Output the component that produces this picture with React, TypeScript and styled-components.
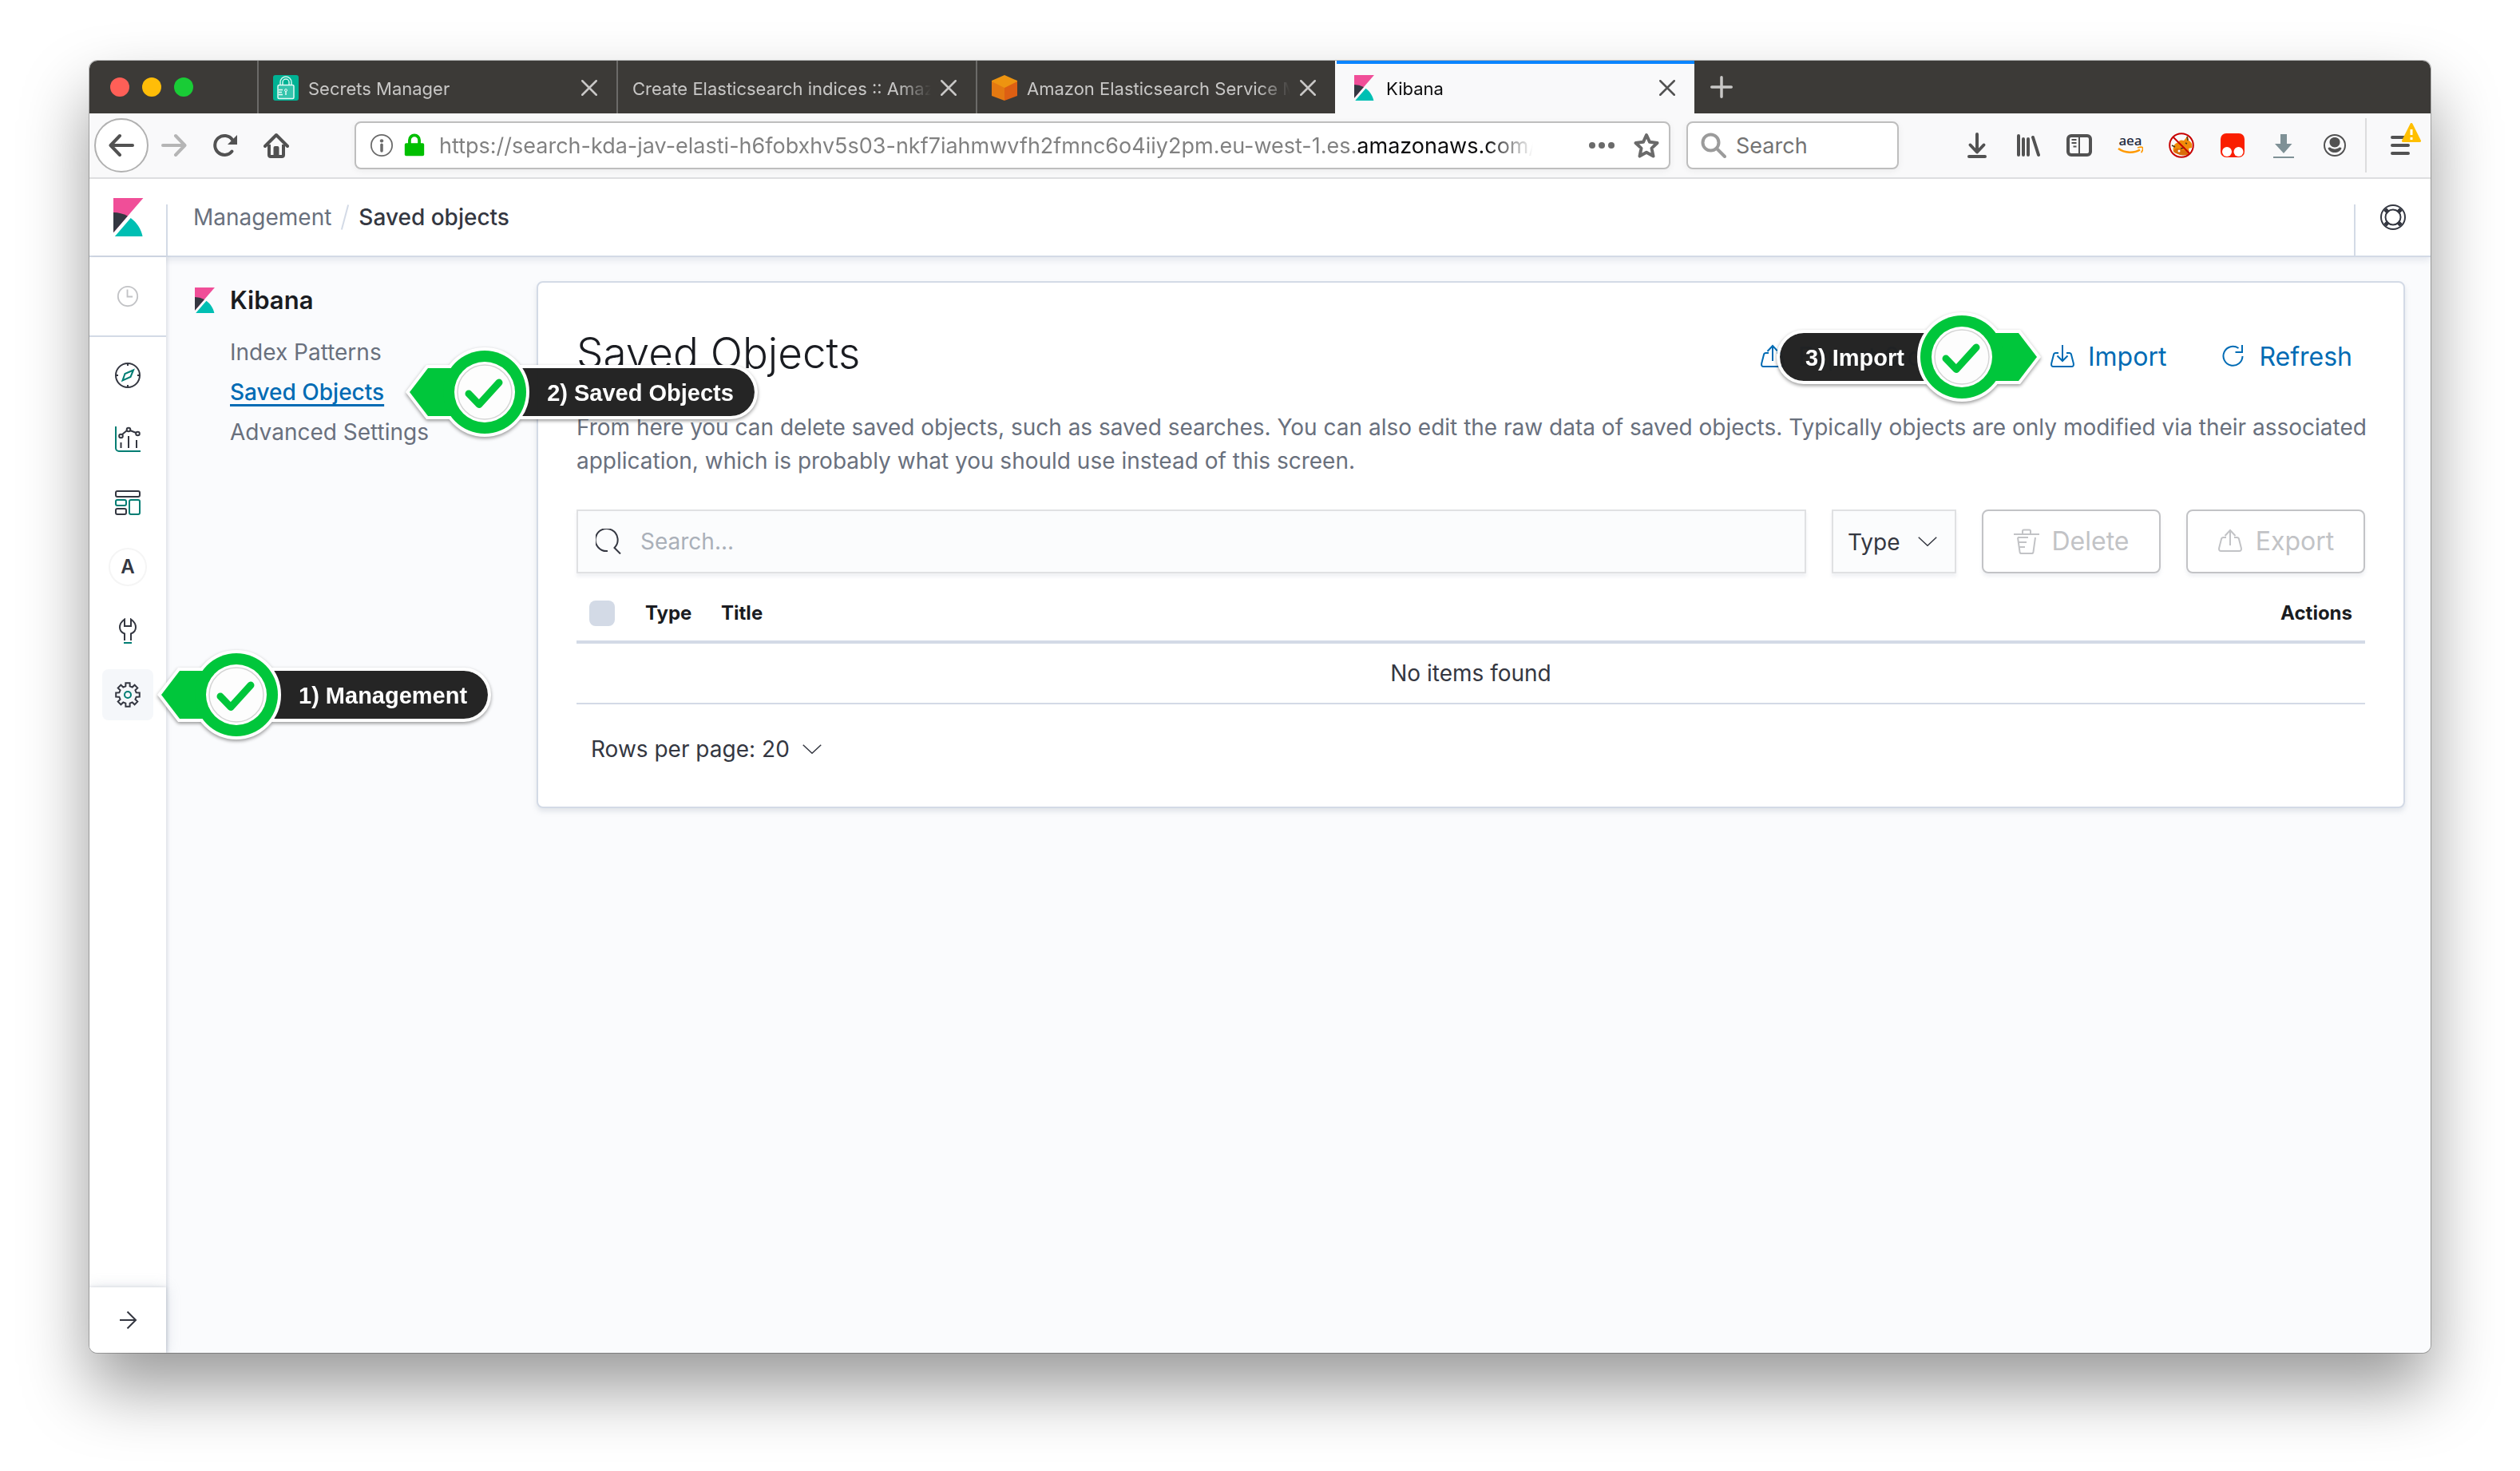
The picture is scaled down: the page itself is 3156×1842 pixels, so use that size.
import React from "react";
import styled, { createGlobalStyle, css } from "styled-components";

const color = {
  ink: "#343741",
  title: "#1a1c21",
  subdued: "#69707d",
  link: "#006bb4",
  line: "#d3dae6",
  page: "#fafbfd",
  field: "#fbfcfd",
  disabled: "#c2c3c6",
  teal: "#017d73",
  chromeDark: "#3c3a37",
  chromeIcon: "#525252",
  green: "#00c63b",
};

const GlobalStyle = createGlobalStyle`
  *, *::before, *::after { box-sizing: border-box; }
  body {
    margin: 0;
    background: #fff;
    color: ${color.ink};
    font-family: Inter, "Liberation Sans", sans-serif;
    font-size: 28px;
    line-height: 42px;
  }
  button, input, select {
    font: inherit;
    color: inherit;
    margin: 0;
    padding: 0;
    border: 0;
    border-radius: 0;
    background: none;
    outline: none;
  }
  button { cursor: pointer; }
  a { color: inherit; text-decoration: none; }
  ul { margin: 0; padding: 0; list-style: none; }
  h1, h2, p { margin: 0; font-weight: inherit; font-size: inherit; }
  svg { display: block; flex: none; }
`;

/* ---------- icons ---------- */

type IconProps = { size?: number; children: React.ReactNode; width?: number };

const Icon = ({ size = 32, width = 2, children }: IconProps) => (
  <svg
    width={size}
    height={size}
    viewBox="0 0 32 32"
    fill="none"
    stroke="currentColor"
    strokeWidth={width}
    aria-hidden="true"
  >
    {children}
  </svg>
);

const KibanaLogo = ({ size }: { size: number }) => (
  <svg width={size} height={size} viewBox="0 0 32 32" aria-hidden="true">
    <path fill="#f04e98" d="M4 0v28.789L28.935.017z" />
    <path fill="#343741" d="M4 12v16.789l11.906-13.738A24.721 24.721 0 0 0 4 12" />
    <path fill="#00bfb3" d="M18.479 16.664L6.268 30.754l-1.073 1.237h23.191c-1.252-6.292-4.883-11.719-9.908-15.327" />
  </svg>
);

const SecretsIcon = () => (
  <svg width="32" height="32" viewBox="0 0 32 32" aria-hidden="true">
    <rect width="32" height="32" rx="3" fill="#00b294" />
    <path d="M9 12V9a7 7 0 0 1 14 0v3M12 12V9a4 4 0 0 1 8 0v3" fill="none" stroke="#d5f5ee" strokeWidth="1.5" />
    <rect x="6" y="12.5" width="20" height="17" rx="1.5" fill="#35c4ac" stroke="#e6faf6" strokeWidth="1.5" />
    <path d="M7 18.500h5M7 21.500h4M7 24.500h5M16 20v5" stroke="#e6faf6" strokeWidth="1.5" />
    <circle cx="16" cy="19" r="1.5" fill="none" stroke="#e6faf6" />
  </svg>
);

const CubeIcon = () => (
  <svg width="32" height="32" viewBox="0 0 32 32" aria-hidden="true">
    <path fill="#ee9410" d="M16 0 32 7v2l-16 8L0 9V7z" />
    <path fill="#e47911" d="M0 8l16 8v16L0 26z" />
    <path fill="#dd5f13" d="M32 8l-16 8v16l16-6z" />
  </svg>
);

const CloseIcon = () => (
  <Icon size={20} width={4}>
    <path d="M2 2l28 28M30 2L2 30" strokeLinecap="round" />
  </Icon>
);

const PlusIcon = () => (
  <Icon size={28} width={4}>
    <path d="M16 2v28M2 16h28" strokeLinecap="round" />
  </Icon>
);

const ArrowLeftIcon = () => (
  <Icon width={4}>
    <path d="M30 16H3M14 4L2.500 16 14 28" strokeLinecap="round" strokeLinejoin="round" />
  </Icon>
);

const ArrowRightIcon = () => (
  <Icon width={4}>
    <path d="M2 16h27M18 4l11.500 12L18 28" strokeLinecap="round" strokeLinejoin="round" />
  </Icon>
);

const ReloadIcon = () => (
  <Icon width={4}>
    <path d="M24.500 23.500A12 12 0 1 1 25 9" strokeLinecap="round" />
    <path d="M31 3v12H19z" fill="currentColor" stroke="none" />
  </Icon>
);

const HomeIcon = () => (
  <Icon width={4}>
    <path d="M2 17L16 3l14 14" strokeLinecap="round" strokeLinejoin="round" />
    <path d="M7 15v13a2 2 0 0 0 2 2h14a2 2 0 0 0 2-2V15" />
    <path d="M12.500 30V19a2 2 0 0 1 2-2h3a2 2 0 0 1 2 2v11z" fill="currentColor" stroke="none" />
  </Icon>
);

const InfoIcon = () => (
  <Icon size={28}>
    <circle cx="16" cy="16" r="15" />
    <circle cx="16" cy="9.5" r="2.5" fill="currentColor" stroke="none" />
    <path d="M16 15v9" strokeWidth="4" strokeLinecap="round" />
  </Icon>
);

const LockIcon = () => (
  <Icon size={30} width={4}>
    <path d="M9.500 15V9a6.500 6.500 0 0 1 13 0v6" />
    <rect x="3" y="13" width="26" height="17" rx="2" fill="currentColor" stroke="none" />
  </Icon>
);

const DotsIcon = () => (
  <Icon>
    <g fill="currentColor" stroke="none">
      <circle cx="4" cy="16" r="4" />
      <circle cx="16" cy="16" r="4" />
      <circle cx="28" cy="16" r="4" />
    </g>
  </Icon>
);

const StarIcon = () => (
  <Icon width={4}>
    <path d="M16 3l4 8.800 9.500 1.200-7 6.600 2 10L16 24.800l-8.500 4.800 2-10-7-6.600 9.500-1.200z" strokeLinejoin="round" />
  </Icon>
);

const GlassIcon = () => (
  <Icon width={4}>
    <circle cx="12.5" cy="12.5" r="10" />
    <path d="M20 20l10 10" strokeLinecap="round" />
  </Icon>
);

const DownloadsIcon = () => (
  <Icon width={4}>
    <path d="M16 2v22M7.500 15.500L16 24.500 24.500 15.500" strokeLinejoin="round" strokeLinecap="round" />
    <path d="M6 30h20" strokeLinecap="round" />
  </Icon>
);

const LibraryIcon = () => (
  <Icon width={4}>
    <path d="M4 4v24M10 8v20M16 8v20M22 6l7 22" strokeLinecap="round" />
  </Icon>
);

const SidebarIcon = () => (
  <Icon width={4}>
    <rect x="2" y="4" width="28" height="24" rx="4" />
    <path d="M16 4v24" strokeWidth="2" />
    <path d="M6.500 9h6M6.500 13h6M8.500 17.500h4" strokeWidth="2" />
  </Icon>
);

const AeaIcon = () => (
  <svg width="32" height="32" viewBox="0 0 32 32" aria-hidden="true">
    <text x="16" y="16" textAnchor="middle" fontFamily="Noto Sans, sans-serif" fontSize="17" fontWeight="500" fill="#1f2b3e">
      aea
    </text>
    <path d="M1 20c8 6 20 6 27 1.500" fill="none" stroke="#f90" strokeWidth="2.5" />
    <path d="M25 19c3-1 6-1 6.500 0s0 4-2 6" fill="none" stroke="#f90" strokeWidth="1.8" />
  </svg>
);

const NoFoxIcon = () => (
  <svg width="32" height="32" viewBox="0 0 32 32" aria-hidden="true">
    <path
      fill="#f08c0a"
      d="M6 24c-1-5 0-10 6-12 2-3 4-3 7-2l5-6 1 6c4 2 5 5 4 9l-4 1c1 3 1 6-1 9l-6-3c-4 1-9 1-12-2z"
    />
    <path d="M6 23c3-4 6-4 9-2s6 0 9 3l1 4c-6 1-14 1-19-5z" fill="#d96c0a" />
    <path d="M4 16l4 2M23 5l1 5M21 13l2 1M15 20l5-1" stroke="#4d3a1c" strokeWidth="1.5" />
    <circle cx="13" cy="23" r="1.5" fill="#fff" />
    <circle cx="16" cy="16" r="14.8" fill="none" stroke="#c80000" strokeWidth="2" />
    <path d="M5.500 5.500l21 21" stroke="#c80000" strokeWidth="2" />
  </svg>
);

const RedBoxIcon = () => (
  <svg width="32" height="32" viewBox="0 0 32 32" aria-hidden="true">
    <rect x="1" y="1" width="30" height="30" rx="7" fill="#fa1e00" />
    <circle cx="9" cy="24" r="6" fill="#fff" />
    <circle cx="23.5" cy="24" r="6" fill="#fff" />
  </svg>
);

const GreyDownIcon = () => (
  <svg width="32" height="32" viewBox="0 0 32 32" fill="#7f9196" aria-hidden="true">
    <path d="M12 2h8v12h6.500L16 26 5 14h7zM3 30h26v2H3z" />
  </svg>
);

const AccountIcon = () => (
  <Icon width={2}>
    <circle cx="16" cy="16" r="13" />
    <g fill="currentColor" stroke="none">
      <path d="M16 6c4 0 6.500 2.500 6.500 6s-2.500 6.500-6.500 6.500-6.500-3-6.500-6.500S12 6 16 6z" />
      <path d="M7.500 19.500c1.500-1.500 3-1 4 0 2.500 1.500 6.500 1.500 9 0 1-1 2.500-1.500 4 0-1 3.500-4.500 5.500-8.500 5.500s-7.500-2-8.500-5.500z" />
    </g>
  </Icon>
);

const MenuIcon = () => (
  <Icon width={4}>
    <path d="M6 6h20M6 16h20M6 26h20" strokeLinecap="round" />
  </Icon>
);

const WarningIcon = () => (
  <svg width="24" height="24" viewBox="0 0 24 24" aria-hidden="true">
    <path d="M12 1.500L22.500 22.500h-21z" fill="#ffbf00" stroke="#ffbf00" strokeWidth="3" strokeLinejoin="round" />
    <path d="M12 8v7M12 18v3" stroke="#fff" strokeWidth="3" />
  </svg>
);

const HelpIcon = () => (
  <Icon>
    <circle cx="16" cy="16" r="15" />
    <circle cx="16" cy="16" r="9.5" />
    <path d="M6 6l4 4M26 6l-4 4M6 26l4-4M26 26l-4-4" strokeWidth="5" />
  </Icon>
);

const ClockIcon = () => (
  <Icon size={30}>
    <circle cx="16" cy="16" r="13" />
    <path d="M15.500 7v9.500h7" />
  </Icon>
);

const CompassIcon = () => (
  <Icon>
    <circle cx="16" cy="16" r="15" />
    <path d="M16 1v3M16 28v3M1 16h3M28 16h3" />
    <path d="M23 9.500l-3.500 8.500L9.500 22.500 12.500 14z" stroke={color.teal} />
  </Icon>
);

const VisualizeIcon = () => (
  <Icon>
    <path d="M1 0v27a4 4 0 0 0 4 4h27" stroke={color.teal} />
    <path d="M7.500 20v7M17 12v15M27 17v10" />
    <circle cx="7.5" cy="12" r="2.3" />
    <circle cx="17" cy="4" r="2.3" />
    <circle cx="28.5" cy="9" r="2.3" />
    <path d="M9 10l6-5M19 5l7.500 3" />
  </Icon>
);

const DashboardIcon = () => (
  <Icon>
    <rect x="1" y="1" width="30" height="7" rx="2" />
    <rect x="1" y="12" width="13" height="7" rx="2" stroke={color.teal} />
    <rect x="18" y="12" width="13" height="18" rx="2" stroke={color.teal} />
    <rect x="1" y="23" width="13" height="7" rx="2" />
  </Icon>
);

const WrenchIcon = () => (
  <Icon>
    <path d="M12 28v-8.500C8 18 6 15 6 11.500 6 7 8.500 4 12 1.500V10h8V1.500c3.500 2.500 6 5.500 6 10 0 3.500-2 6.500-6 8V28" />
    <path d="M11 31h10" stroke={color.teal} />
  </Icon>
);

const gearOutline = (() => {
  const points: string[] = [];
  for (let tooth = 0; tooth < 8; tooth += 1) {
    const steps: [number, number][] = [
      [-14, 11],
      [-10, 15],
      [10, 15],
      [14, 11],
    ];
    steps.forEach(([offset, radius]) => {
      const angle = ((tooth * 45 + offset) * Math.PI) / 180;
      points.push(`${(16 + radius * Math.cos(angle)).toFixed(2)},${(16 + radius * Math.sin(angle)).toFixed(2)}`);
    });
  }
  return points.join(" ");
})();

const GearIcon = () => (
  <Icon>
    <polygon points={gearOutline} />
    <circle cx="16" cy="16" r="4" stroke={color.teal} />
  </Icon>
);

const ExpandIcon = () => (
  <Icon>
    <path d="M6 16h19M15.500 5.500L26 16 15.500 26.500" />
  </Icon>
);

const ShareBox =
  "M11 11H7.500c-1.500 0-2.200.8-2.500 2L2.200 24c-.5 2.500.3 4 2.500 4h22.600c2.200 0 3-1.500 2.500-4L27 13c-.3-1.200-1-2-2.500-2H21";

const ExportIcon = () => (
  <Icon>
    <path d={ShareBox} />
    <path d="M16 2v19M9.500 9L16 2l6.500 7" />
  </Icon>
);

const ImportIcon = () => (
  <Icon>
    <path d={ShareBox} />
    <path d="M16 1v20M9.500 14.500L16 21l6.500-6.500" />
  </Icon>
);

const RefreshIcon = () => (
  <Icon>
    <path d="M27 1v9h-8.500" />
    <path d="M22.500 5A12 12 0 1 0 27.500 15" />
  </Icon>
);

const TrashIcon = () => (
  <Icon>
    <path d="M0 7h32M11 7V3a1.500 1.500 0 0 1 1.500-1.500h7A1.500 1.500 0 0 1 21 3v4" />
    <path d="M5 11l2.500 18c.2 1.200.8 2 2 2h13c1.200 0 1.800-.8 2-2L27 11" />
    <path d="M5 11h13M6 17h10M7 23h7" />
  </Icon>
);

const SearchIcon = () => (
  <Icon>
    <path d="M15 28A14 14 0 1 1 23.500 24L31 31.500" />
  </Icon>
);

const ChevronIcon = () => (
  <Icon size={24}>
    <path d="M1 9l15 14L31 9" />
  </Icon>
);

/* ---------- window ---------- */

const Desktop = styled.div`
  display: flex;
  min-height: 100vh;
  padding: 76px 112px 148px;
`;

const Window = styled.div`
  flex: 1;
  min-width: 0;
  display: flex;
  flex-direction: column;
  overflow: hidden;
  border-radius: 10px;
  background: ${color.page};
`;

const WindowShadow = styled.div`
  flex: 1;
  min-width: 0;
  display: flex;
  border-radius: 10px;
  box-shadow: 0 0 0 1px rgba(0, 0, 0, 0.25), 0 44px 84px rgba(0, 0, 0, 0.4);
`;

const TabStrip = styled.div`
  display: flex;
  height: 66px;
  background: ${color.chromeDark};
  color: #c8c7c6;
  font-size: 22px;
  line-height: 32px;
`;

const Lights = styled.div`
  display: flex;
  align-items: center;
  gap: 16px;
  width: 210px;
  padding-left: 26px;
`;

const Light = styled.span<{ $fill: string }>`
  width: 24px;
  height: 24px;
  border-radius: 50%;
  background: ${(p) => p.$fill};
`;

const Tab = styled.div<{ $active?: boolean }>`
  display: flex;
  align-items: center;
  gap: 12px;
  width: 450px;
  padding: 2px 24px 0 18px;
  border-left: 2px solid #6b6a68;
  ${(p) =>
    p.$active &&
    css`
      background: #f9f9fa;
      color: #0c0c0d;
      border-left-color: #f9f9fa;
      box-shadow: inset 0 4px 0 #0a84ff;
    `}
`;

const TabTitle = styled.button`
  flex: 1;
  min-width: 0;
  padding-top: 2px;
  overflow: hidden;
  white-space: nowrap;
  text-align: left;
  mask-image: linear-gradient(to left, transparent, #000 40px);
`;

const IconButton = styled.button<{ $tint?: string }>`
  display: flex;
  align-items: center;
  justify-content: center;
  color: ${(p) => p.$tint ?? "inherit"};
`;

const NewTab = styled(IconButton)`
  width: 68px;
`;

const Toolbar = styled.div`
  display: flex;
  align-items: center;
  height: 82px;
  padding: 0 6px;
  background: #f9f9fa;
  border-bottom: 2px solid #e0e0e1;
  color: ${color.chromeIcon};
`;

const ToolButton = styled(IconButton)`
  position: relative;
  width: 64px;
  height: 64px;
`;

const BackButton = styled(IconButton)`
  width: 68px;
  height: 68px;
  border: 2px solid #b1b1b1;
  border-radius: 50%;
  background: #fff;
`;

const ChromeField = styled.div<{ $grow?: boolean }>`
  display: flex;
  align-items: center;
  gap: 12px;
  height: 60px;
  padding: 0 12px 0 18px;
  border: 2px solid #bebebe;
  border-radius: 8px;
  background: #fff;
  box-shadow: 0 2px 8px rgba(0, 0, 0, 0.06);
  ${(p) =>
    p.$grow
      ? css`
          flex: 1;
          min-width: 0;
          margin: 0 20px 0 66px;
        `
      : css`
          width: 266px;
          margin-right: 66px;
          padding-left: 16px;
        `}
`;

const Address = styled.input`
  flex: 1;
  min-width: 0;
  margin: 0 40px 0 4px;
  padding-top: 2px;
  font-size: 27px;
  color: transparent;
  background: linear-gradient(to right, #808080 1151px, #0c0c0d 1151px, #0c0c0d 1310px, transparent 1370px);
  background-clip: text;
  -webkit-background-clip: text;
`;

const ChromeSearch = styled.input`
  flex: 1;
  min-width: 0;
  padding-top: 2px;
  font-size: 27px;
  &::placeholder {
    color: #737373;
    opacity: 1;
  }
`;

const FieldActions = styled.div`
  display: flex;
  gap: 24px;
`;

const ToolDivider = styled.span`
  width: 2px;
  height: 68px;
  margin: 0 10px 0 6px;
  background: #dcdcdd;
`;

const WarningBadge = styled.span`
  position: absolute;
  top: 4px;
  right: 6px;
`;

/* ---------- kibana shell ---------- */

const Header = styled.header`
  display: flex;
  align-items: stretch;
  height: 98px;
  background: #fff;
  border-bottom: 2px solid ${color.line};
  box-shadow: 0 4px 8px rgba(152, 162, 179, 0.2);
  position: relative;
`;

const HeaderCell = styled.a<{ $width: number }>`
  display: flex;
  align-items: center;
  justify-content: center;
  width: ${(p) => p.$width}px;
`;

const HeaderDivider = styled.span`
  width: 2px;
  margin-top: 32px;
  background: ${color.line};
`;

const Breadcrumbs = styled.nav`
  flex: 1;
  display: flex;
  align-items: center;
  gap: 16px;
  padding-left: 32px;
  color: ${color.subdued};
`;

const Slash = styled.span`
  width: 2px;
  height: 32px;
  background: ${color.line};
  transform: rotate(15deg);
`;

const Current = styled.span`
  color: ${color.ink};
  font-weight: 500;
`;

const Body = styled.div`
  flex: 1;
  display: flex;
`;

const Rail = styled.nav`
  position: relative;
  z-index: 1;
  display: flex;
  flex-direction: column;
  width: 96px;
  background: #fff;
  box-shadow: 2px 0 4px rgba(152, 162, 179, 0.3);
`;

const Recent = styled.div`
  display: flex;
  align-items: center;
  justify-content: center;
  height: 100px;
  border-bottom: 2px solid ${color.line};
  color: ${color.disabled};
`;

const RailList = styled.ul`
  flex: 1;
  display: flex;
  flex-direction: column;
  align-items: center;
  gap: 16px;
  padding-top: 16px;
`;

const RailItem = styled.li`
  position: relative;
`;

const RailLink = styled.a<{ $active?: boolean }>`
  display: flex;
  align-items: center;
  justify-content: center;
  width: 64px;
  height: 64px;
  border-radius: 8px;
  background: ${(p) => (p.$active ? "#f5f7fa" : "transparent")};
`;

const Letter = styled.span`
  display: flex;
  align-items: center;
  justify-content: center;
  width: 48px;
  height: 48px;
  border: 2px solid #f5f5f5;
  border-radius: 50%;
  font-size: 24px;
  font-weight: 600;
`;

const Expand = styled(IconButton)`
  height: 82px;
  background: #fff;
  box-shadow: 0 0 16px rgba(152, 162, 179, 0.3), 0 0 4px rgba(152, 162, 179, 0.4);
`;

const Main = styled.main`
  flex: 1;
  min-width: 0;
  display: flex;
  align-items: flex-start;
  padding: 30px 32px;
`;

const SideNav = styled.nav`
  width: 432px;
  padding-top: 8px;
  color: ${color.subdued};
`;

const SideHeading = styled.h2`
  display: flex;
  align-items: center;
  gap: 16px;
  margin-bottom: 24px;
  color: ${color.title};
  font-size: 31px;
  font-weight: 600;
  line-height: 32px;
`;

const SideList = styled.ul`
  padding-left: 48px;
`;

const SideItem = styled.li`
  position: relative;
  width: fit-content;
  line-height: 50px;
`;

const SideLink = styled.a<{ $active?: boolean }>`
  ${(p) =>
    p.$active &&
    css`
      color: ${color.link};
      font-weight: 500;
      text-decoration: underline;
      text-decoration-thickness: 3px;
      text-underline-offset: 5px;
      text-decoration-skip-ink: none;
    `}
`;

/* ---------- saved objects panel ---------- */

const Panel = styled.section`
  flex: 1;
  min-width: 0;
  padding: 48px;
  border: 2px solid ${color.line};
  border-radius: 8px;
  background: #fff;
  box-shadow: 0 4px 6px rgba(152, 162, 179, 0.25);
`;

const PanelHead = styled.div`
  display: flex;
  align-items: flex-end;
  justify-content: space-between;
`;

const Title = styled.h1`
  color: ${color.title};
  font-size: 53px;
  font-weight: 300;
  line-height: 80px;
`;

const HeadActions = styled.div`
  display: flex;
  gap: 36px;
`;

const ActionSlot = styled.div`
  position: relative;
`;

const LinkButton = styled.button`
  display: flex;
  align-items: center;
  gap: 16px;
  height: 70px;
  padding: 0 16px;
  color: ${color.link};
  font-size: 32px;
`;

const Intro = styled.p`
  margin: 32px -16px 40px 0;
  color: ${color.subdued};
`;

const Filters = styled.div`
  display: flex;
  gap: 32px;
`;

const fieldBox = css`
  display: flex;
  align-items: center;
  height: 80px;
  border: 2px solid #e0e1e3;
  background: ${color.field};
  box-shadow: 0 4px 4px rgba(152, 162, 179, 0.15);
`;

const SearchBox = styled.label`
  ${fieldBox}
  flex: 1;
  gap: 24px;
  padding: 0 22px;
`;

const SearchInput = styled.input`
  flex: 1;
  min-width: 0;
  &::placeholder {
    color: #aab0b9;
    opacity: 1;
  }
`;

const TypeBox = styled.div`
  ${fieldBox}
  position: relative;
  width: 156px;
`;

const BareSelect = styled.select`
  appearance: none;
  cursor: pointer;
`;

const TypeSelect = styled(BareSelect)`
  width: 100%;
  height: 100%;
  padding: 2px 0 0 18px;
`;

const TypeChevron = styled.span`
  position: absolute;
  right: 22px;
  pointer-events: none;
`;

const OutlineButton = styled.button`
  display: flex;
  align-items: center;
  justify-content: center;
  gap: 16px;
  width: 224px;
  height: 80px;
  border: 2px solid ${color.disabled};
  border-radius: 8px;
  color: ${color.disabled};
  font-size: 32px;
  box-shadow: 0 4px 4px rgba(152, 162, 179, 0.15);
`;

const Table = styled.table`
  width: 100%;
  margin-top: 16px;
  border-collapse: separate;
  border-spacing: 0;
`;

const HeadCell = styled.th<{ $width?: number; $end?: boolean }>`
  width: ${(p) => (p.$width ? `${p.$width}px` : "auto")};
  height: 72px;
  padding: 0 16px;
  border-bottom: 4px solid ${color.line};
  color: ${color.title};
  font-size: 24px;
  font-weight: 700;
  line-height: 36px;
  text-align: ${(p) => (p.$end ? "right" : "left")};
`;

const SelectAll = styled.input`
  appearance: none;
  display: block;
  width: 32px;
  height: 32px;
  border-radius: 8px;
  background: ${color.line};
`;

const EmptyCell = styled.td`
  height: 76px;
  padding: 0;
  border-bottom: 2px solid ${color.line};
  text-align: center;
`;

const Pager = styled.div`
  display: flex;
  align-items: center;
  gap: 8px;
  height: 48px;
  margin-top: 32px;
  padding-left: 18px;
`;

const PageSize = styled.span`
  display: flex;
  align-items: center;
  gap: 16px;
`;

/* ---------- step markers ---------- */

type Side = "left" | "right";

const Marker = styled.div<{ $side: Side; $gap: number }>`
  position: absolute;
  z-index: 2;
  top: 50%;
  display: flex;
  flex-direction: ${(p) => (p.$side === "right" ? "row" : "row-reverse")};
  align-items: center;
  transform: translateY(-50%);
  filter: drop-shadow(0 2px 2px rgba(0, 0, 0, 0.4));
  pointer-events: none;
  ${(p) => (p.$side === "right" ? `left: calc(100% + ${p.$gap}px);` : `right: calc(100% + ${p.$gap}px);`)}
`;

const MarkerLabel = styled.span<{ $side: Side }>`
  height: 68px;
  border: 4px solid #fff;
  background: rgba(33, 33, 33, 0.97);
  background-clip: padding-box;
  color: #fff;
  font-family: "Liberation Sans", Arial, sans-serif;
  font-size: 29px;
  font-weight: 700;
  line-height: 62px;
  white-space: nowrap;
  ${(p) =>
    p.$side === "right"
      ? css`
          margin-left: -20px;
          padding: 0 26px 0 34px;
          border-radius: 0 34px 34px 0;
        `
      : css`
          margin-right: -20px;
          padding: 0 28px 0 32px;
          border-radius: 34px 0 0 34px;
        `}
`;

const MarkerArt = styled.svg`
  position: relative;
  z-index: 1;
`;

const StepMarker = ({ side, gap, children }: { side: Side; gap: number; children: React.ReactNode }) => (
  <Marker $side={side} $gap={gap}>
    <MarkerArt
      width="160"
      height="120"
      viewBox={side === "right" ? "-100 -60 160 120" : "-60 -60 160 120"}
      aria-hidden="true"
    >
      <g transform={side === "right" ? undefined : "scale(-1 1)"}>
        <g fill="#fff" stroke="#fff" strokeWidth="8">
          <path d="M-94 0L-71-30H0V30H-71z" />
          <circle r="52" />
        </g>
        <g fill={color.green}>
          <path d="M-94 0L-71-30H0V30H-71z" />
          <circle r="52" />
        </g>
      </g>
      <circle r="38" fill="#fff" />
      <circle r="34" fill="#fdfdfd" stroke="#d4d4d4" strokeWidth="1.5" />
      <path
        d="M-20 2L-7 15.500L18-12"
        fill="none"
        stroke={color.green}
        strokeWidth="9"
        strokeLinecap="round"
        strokeLinejoin="round"
      />
    </MarkerArt>
    <MarkerLabel $side={side}>{children}</MarkerLabel>
  </Marker>
);

/* ---------- page ---------- */

const tabs = [
  { title: "Secrets Manager", icon: <SecretsIcon /> },
  { title: "Create Elasticsearch indices :: Amazon", icon: null },
  { title: "Amazon Elasticsearch Service Management", icon: <CubeIcon /> },
  { title: "Kibana", icon: <KibanaLogo size={32} />, active: true },
];

const extensions = [
  { name: "Downloads", icon: <DownloadsIcon /> },
  { name: "Library", icon: <LibraryIcon /> },
  { name: "Sidebars", icon: <SidebarIcon /> },
  { name: "AWS extension", icon: <AeaIcon /> },
  { name: "Proxy disabled", icon: <NoFoxIcon /> },
  { name: "Tampermonkey", icon: <RedBoxIcon /> },
  { name: "Save page", icon: <GreyDownIcon /> },
  { name: "Account", icon: <AccountIcon /> },
];

const apps = [
  { name: "Discover", icon: <CompassIcon /> },
  { name: "Visualize", icon: <VisualizeIcon /> },
  { name: "Dashboard", icon: <DashboardIcon /> },
  { name: "Alerting", icon: <Letter>A</Letter> },
  { name: "Dev Tools", icon: <WrenchIcon /> },
  { name: "Management", icon: <GearIcon />, step: "1) Management" },
];

const sections = [
  { name: "Index Patterns" },
  { name: "Saved Objects", step: "2) Saved Objects" },
  { name: "Advanced Settings" },
];

const Chrome = () => (
  <>
    <TabStrip>
      <Lights>
        <Light $fill="#ff5f57" />
        <Light $fill="#ffbd08" />
        <Light $fill="#19cc36" />
      </Lights>
      {tabs.map((tab) => (
        <Tab key={tab.title} $active={tab.active}>
          {tab.icon}
          <TabTitle>{tab.title}</TabTitle>
          <IconButton aria-label={`Close ${tab.title}`} $tint={tab.active ? color.chromeIcon : "#c8c7c6"}>
            <CloseIcon />
          </IconButton>
        </Tab>
      ))}
      <NewTab aria-label="New tab">
        <PlusIcon />
      </NewTab>
    </TabStrip>
    <Toolbar>
      <BackButton aria-label="Back">
        <ArrowLeftIcon />
      </BackButton>
      <ToolButton aria-label="Forward" $tint="#b5b5b5">
        <ArrowRightIcon />
      </ToolButton>
      <ToolButton aria-label="Reload">
        <ReloadIcon />
      </ToolButton>
      <ToolButton aria-label="Home">
        <HomeIcon />
      </ToolButton>
      <ChromeField $grow>
        <IconButton aria-label="Site information" $tint="#6a6a6a">
          <InfoIcon />
        </IconButton>
        <IconButton aria-label="Secure connection" $tint="#00bf00">
          <LockIcon />
        </IconButton>
        <Address
          aria-label="Address"
          defaultValue="https://search-kda-jav-elasti-h6fobxhv5s03-nkf7iahmwvfh2fmnc6o4iiy2pm.eu-west-1.es.amazonaws.com/"
        />
        <FieldActions>
          <IconButton aria-label="Page actions" $tint="#6a6a6a">
            <DotsIcon />
          </IconButton>
          <IconButton aria-label="Bookmark this page" $tint="#6a6a6a">
            <StarIcon />
          </IconButton>
        </FieldActions>
      </ChromeField>
      <ChromeField>
        <IconButton aria-label="Search the web" $tint="#9b9b9b">
          <GlassIcon />
        </IconButton>
        <ChromeSearch aria-label="Search the web" placeholder="Search" />
      </ChromeField>
      {extensions.map((item) => (
        <ToolButton key={item.name} aria-label={item.name}>
          {item.icon}
        </ToolButton>
      ))}
      <ToolDivider />
      <ToolButton aria-label="Open menu">
        <MenuIcon />
        <WarningBadge>
          <WarningIcon />
        </WarningBadge>
      </ToolButton>
    </Toolbar>
  </>
);

const SavedObjects = () => (
  <Panel>
    <PanelHead>
      <Title>Saved Objects</Title>
      <HeadActions>
        <ActionSlot>
          <LinkButton>
            <ExportIcon />
            Export 0 objects
          </LinkButton>
        </ActionSlot>
        <ActionSlot>
          <LinkButton>
            <ImportIcon />
            Import
          </LinkButton>
          <StepMarker side="left" gap={-6}>
            3) Import
          </StepMarker>
        </ActionSlot>
        <ActionSlot>
          <LinkButton>
            <RefreshIcon />
            Refresh
          </LinkButton>
        </ActionSlot>
      </HeadActions>
    </PanelHead>
    <Intro>
      From here you can delete saved objects, such as saved searches. You can also edit the raw data of saved objects.
      Typically objects are only modified via their associated application, which is probably what you should use
      instead of this screen.
    </Intro>
    <Filters>
      <SearchBox>
        <SearchIcon />
        <SearchInput aria-label="Search saved objects" placeholder="Search..." />
      </SearchBox>
      <TypeBox>
        <TypeSelect aria-label="Type">
          <option>Type</option>
        </TypeSelect>
        <TypeChevron>
          <ChevronIcon />
        </TypeChevron>
      </TypeBox>
      <OutlineButton disabled>
        <TrashIcon />
        Delete
      </OutlineButton>
      <OutlineButton disabled>
        <ExportIcon />
        Export
      </OutlineButton>
    </Filters>
    <Table>
      <thead>
        <tr>
          <HeadCell $width={70}>
            <SelectAll type="checkbox" aria-label="Select all rows" disabled />
          </HeadCell>
          <HeadCell $width={95}>Type</HeadCell>
          <HeadCell>Title</HeadCell>
          <HeadCell $end>Actions</HeadCell>
        </tr>
      </thead>
      <tbody>
        <tr>
          <EmptyCell colSpan={4}>No items found</EmptyCell>
        </tr>
      </tbody>
    </Table>
    <Pager>
      <label htmlFor="page-size">Rows per page:</label>
      <PageSize>
        <BareSelect id="page-size">
          <option>20</option>
        </BareSelect>
        <ChevronIcon />
      </PageSize>
    </Pager>
  </Panel>
);

export default function App() {
  return (
    <>
      <GlobalStyle />
      <Desktop>
        <WindowShadow>
          <Window>
            <Chrome />
            <Header>
              <HeaderCell href="#" aria-label="Kibana home" $width={96}>
                <KibanaLogo size={48} />
              </HeaderCell>
              <HeaderDivider />
              <Breadcrumbs aria-label="Breadcrumbs">
                <a href="#management">Management</a>
                <Slash />
                <Current>Saved objects</Current>
              </Breadcrumbs>
              <HeaderDivider />
              <HeaderCell href="#help" aria-label="Help" $width={94}>
                <HelpIcon />
              </HeaderCell>
            </Header>
            <Body>
              <Rail aria-label="Applications">
                <Recent>
                  <ClockIcon />
                </Recent>
                <RailList>
                  {apps.map((app) => (
                    <RailItem key={app.name}>
                      <RailLink href="#" aria-label={app.name} $active={Boolean(app.step)}>
                        {app.icon}
                      </RailLink>
                      {app.step && (
                        <StepMarker side="right" gap={4}>
                          {app.step}
                        </StepMarker>
                      )}
                    </RailItem>
                  ))}
                </RailList>
                <Expand aria-label="Expand navigation">
                  <ExpandIcon />
                </Expand>
              </Rail>
              <Main>
                <SideNav aria-label="Management">
                  <SideHeading>
                    <KibanaLogo size={32} />
                    Kibana
                  </SideHeading>
                  <SideList>
                    {sections.map((section) => (
                      <SideItem key={section.name}>
                        <SideLink href="#" $active={Boolean(section.step)}>
                          {section.name}
                        </SideLink>
                        {section.step && (
                          <StepMarker side="right" gap={26}>
                            {section.step}
                          </StepMarker>
                        )}
                      </SideItem>
                    ))}
                  </SideList>
                </SideNav>
                <SavedObjects />
              </Main>
            </Body>
          </Window>
        </WindowShadow>
      </Desktop>
    </>
  );
}
